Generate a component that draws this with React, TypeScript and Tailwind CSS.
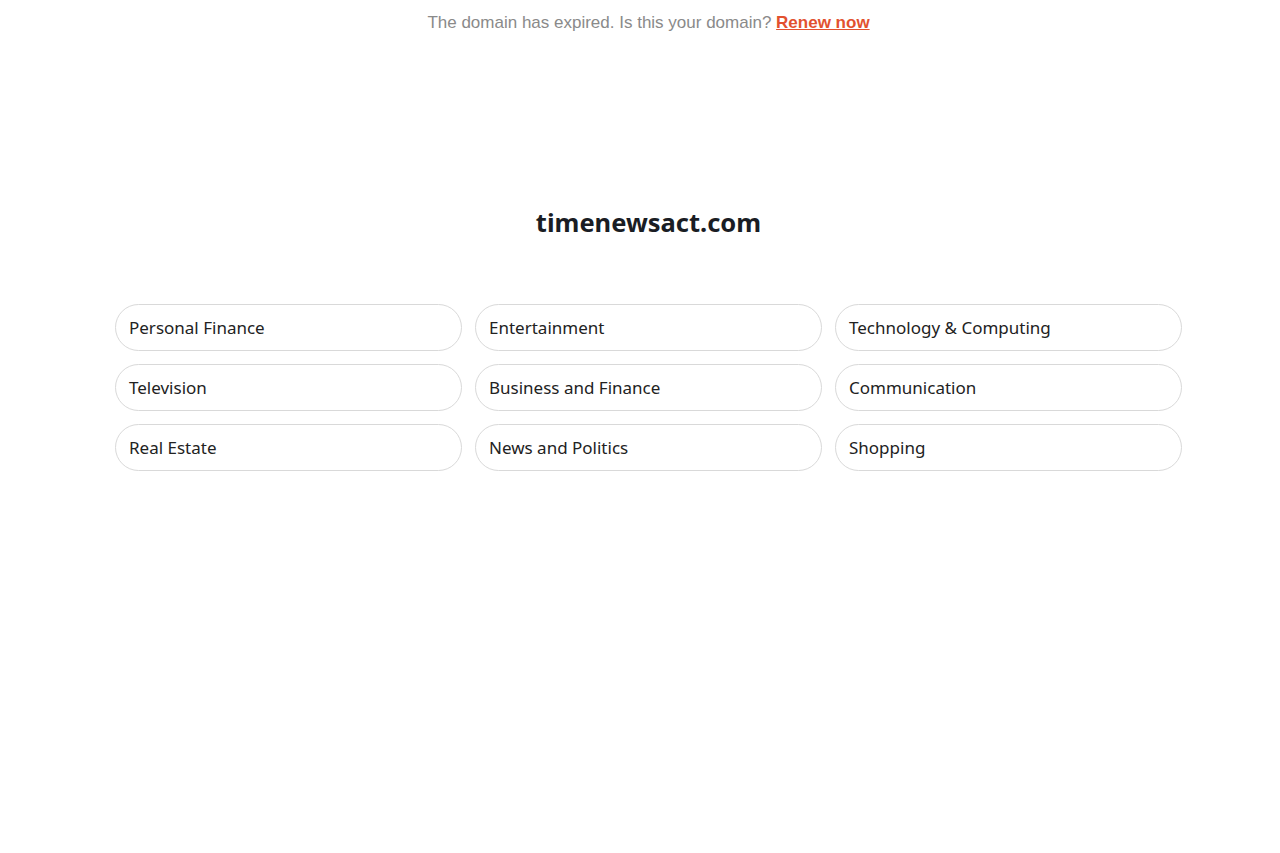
import React from "react";

const items = [
  "Personal Finance",
  "Entertainment",
  "Technology & Computing",
  "Television",
  "Business and Finance",
  "Communication",
  "Real Estate",
  "News and Politics",
  "Shopping",
];

export default function App() {
  return (
    <div className="min-h-[853px] bg-white pl-[17px]">
      <div className="pt-[12px] text-center font-['Liberation_Sans',Arial,sans-serif] text-[17px] leading-[21px] text-[#8a8a8a]">
        The domain has expired. Is this your domain?{" "}
        <a href="#" className="font-bold text-[#e2512f] underline">
          Renew now
        </a>
      </div>
      <h1 className="mt-[172px] text-center font-['Noto_Sans',sans-serif] text-[25.5px] font-bold leading-[34px] text-[#1a1d24]">
        timenewsact.com
      </h1>
      <div className="mx-auto mt-[65px] grid w-[1067px] grid-cols-3 gap-x-[13px] gap-y-[13px]">
        {items.map((t) => (
          <div
            key={t}
            className="flex h-[47px] items-center rounded-full border border-[#d9d9d9] pl-[13px] font-['Noto_Sans',sans-serif] text-[17px] text-[#222]"
          >
            {t}
          </div>
        ))}
      </div>
    </div>
  );
}
